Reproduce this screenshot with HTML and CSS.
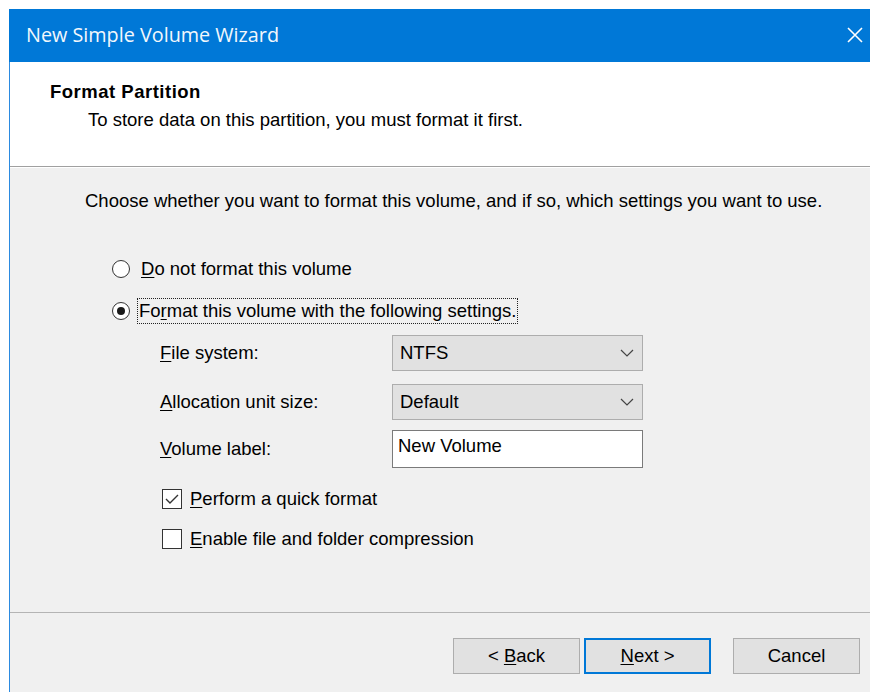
FILE: index.html
```html
<!DOCTYPE html>
<html lang="en">
<head>
<meta charset="utf-8">
<title>New Simple Volume Wizard</title>
<link rel="stylesheet" href="styles.css">
</head>
<body>
<div class="window">
  <div class="titlebar">
    <span class="title">New Simple Volume Wizard</span>
    <svg class="close" width="16" height="16" viewBox="0 0 16 16" aria-hidden="true">
      <path d="M1 1 L15 15 M15 1 L1 15" stroke="#fff" stroke-width="1.6" fill="none"/>
    </svg>
  </div>

  <div class="header">
    <div class="header-title">Format Partition</div>
    <div class="header-sub">To store data on this partition, you must format it first.</div>
  </div>
  <div class="rule"></div>

  <div class="content">
    <p class="intro">Choose whether you want to format this volume, and if so, which settings you want to use.</p>

    <div class="options">
      <label class="radio-row">
        <span class="radio"></span>
        <span class="radio-text"><u>D</u>o not format this volume</span>
      </label>
      <label class="radio-row">
        <span class="radio checked"></span>
        <span class="radio-text focused">Fo<u>r</u>mat this volume with the following settings.</span>
      </label>
    </div>

    <div class="settings">
      <div class="field">
        <span class="field-label"><u>F</u>ile system:</span>
        <div class="select">
          <span>NTFS</span>
          <svg class="chevron" width="14" height="8" viewBox="0 0 14 8" aria-hidden="true"><path d="M1 1 L7 7 L13 1" stroke="#444" stroke-width="1.2" fill="none"/></svg>
        </div>
      </div>
      <div class="field field-last-select">
        <span class="field-label"><u>A</u>llocation unit size:</span>
        <div class="select">
          <span>Default</span>
          <svg class="chevron" width="14" height="8" viewBox="0 0 14 8" aria-hidden="true"><path d="M1 1 L7 7 L13 1" stroke="#444" stroke-width="1.2" fill="none"/></svg>
        </div>
      </div>
      <div class="field field-text">
        <span class="field-label"><u>V</u>olume label:</span>
        <div class="textbox">New Volume</div>
      </div>

      <div class="checks">
        <label class="check-row">
          <span class="checkbox">
            <svg width="18" height="18" viewBox="0 0 18 18" aria-hidden="true"><path d="M3 9 L7 13 L15 5" stroke="#333" stroke-width="1.4" fill="none"/></svg>
          </span>
          <span><u>P</u>erform a quick format</span>
        </label>
        <label class="check-row">
          <span class="checkbox"></span>
          <span><u>E</u>nable file and folder compression</span>
        </label>
      </div>
    </div>
  </div>

  <div class="rule rule-bottom"></div>

  <div class="footer">
    <button class="btn" type="button">&lt; <u>B</u>ack</button>
    <button class="btn btn-default" type="button"><u>N</u>ext &gt;</button>
    <button class="btn btn-cancel" type="button">Cancel</button>
  </div>
</div>
</body>
</html>
```

FILE: styles.css
```css
html, body {
  margin: 0;
  padding: 0;
  background: #ffffff;
  overflow: hidden;
  width: 870px;
  height: 692px;
}

.window {
  margin: 9px 0 0 9px;
  width: 880px;
  height: 700px;
  background: #f0f0f0;
  border-left: 1px solid #2b8ae0;
  font-family: "Liberation Sans", Arial, sans-serif;
  font-size: 18.5px;
  color: #000;
  display: flex;
  flex-direction: column;
}

.titlebar {
  height: 53px;
  flex: none;
  background: #0078d7;
  display: flex;
  align-items: center;
  margin-left: -1px;
  padding-left: 17px;
  box-sizing: border-box;
}

.title {
  font-family: "Open Sans", "Noto Sans", sans-serif;
  font-size: 19.8px;
  color: #f2f7fc;
  flex: 1;
  padding-bottom: 2px;
}

.close {
  margin-right: 27px;
  margin-top: -1px;
}

.header {
  height: 104px;
  flex: none;
  background: #ffffff;
  box-sizing: border-box;
  padding: 20px 0 0 40px;
}

.header-title {
  font-weight: bold;
  letter-spacing: 0.5px;
  line-height: 20px;
}

.header-sub {
  line-height: 20px;
  margin-top: 8px;
  padding-left: 38px;
}

.rule {
  height: 1px;
  flex: none;
  background: #a0a0a0;
  border-bottom: 1px solid #ffffff;
}

.content {
  flex: none;
  height: 444px;
  box-sizing: border-box;
  padding: 23px 0 0 75px;
}

.intro {
  margin: 0;
  line-height: 20px;
}

.options {
  margin-top: 44px;
  margin-left: 27px;
  display: flex;
  flex-direction: column;
  gap: 14px;
}

.radio-row {
  display: flex;
  align-items: center;
  height: 28px;
}

.radio {
  width: 18px;
  height: 18px;
  border: 1px solid #333;
  border-radius: 50%;
  background: #fff;
  box-sizing: border-box;
  margin-right: 9px;
  position: relative;
  flex: none;
}

.radio.checked::after {
  content: "";
  position: absolute;
  left: 4px;
  top: 4px;
  width: 8px;
  height: 8px;
  border-radius: 50%;
  background: #1a1a1a;
}

.radio-text {
  padding: 3px 2px;
  line-height: 20px;
}

.radio-text.focused {
  outline: 1px dotted #222;
  outline-offset: -1px;
  margin-left: -2px;
}

.settings {
  margin-left: 75px;
  margin-top: 10px;
}

.field {
  display: flex;
  align-items: center;
  height: 36px;
  margin-bottom: 13px;
}

.field-last-select {
  margin-bottom: 10px;
}

.field-text {
  height: 38px;
  margin-bottom: 0;
}

.field-label {
  width: 232px;
  flex: none;
  line-height: 20px;
}

.select {
  width: 251px;
  height: 36px;
  box-sizing: border-box;
  background: #e1e1e1;
  border: 1px solid #adadad;
  display: flex;
  align-items: center;
  justify-content: space-between;
  padding: 0 8px 0 7px;
}

.textbox {
  width: 251px;
  height: 38px;
  box-sizing: border-box;
  background: #fff;
  border: 1px solid #7a7a7a;
  padding: 5px 5px 0 5px;
  line-height: 20px;
}

.checks {
  margin-top: 20px;
  margin-left: 2px;
  display: flex;
  flex-direction: column;
  gap: 19px;
}

.check-row {
  display: flex;
  align-items: center;
  height: 21px;
}

.checkbox {
  width: 20px;
  height: 20px;
  box-sizing: border-box;
  border: 1px solid #333;
  background: #fff;
  margin-right: 8px;
  display: flex;
  align-items: center;
  justify-content: center;
  flex: none;
}

.rule-bottom {
  background: #b4b4b4;
  border-bottom-color: #f0f0f0;
}

.footer {
  display: flex;
  padding: 24px 0 0 443px;
}

.btn {
  font: inherit;
  color: #000;
  width: 127px;
  height: 36px;
  box-sizing: border-box;
  background: #e1e1e1;
  border: 1px solid #adadad;
  margin: 0 4px 0 0;
  padding: 0;
}

.btn-default {
  border: 2px solid #0078d7;
}

.btn-cancel {
  margin-left: 18px;
}

u {
  text-decoration-thickness: 1px;
  text-underline-offset: 2px;
}
```
